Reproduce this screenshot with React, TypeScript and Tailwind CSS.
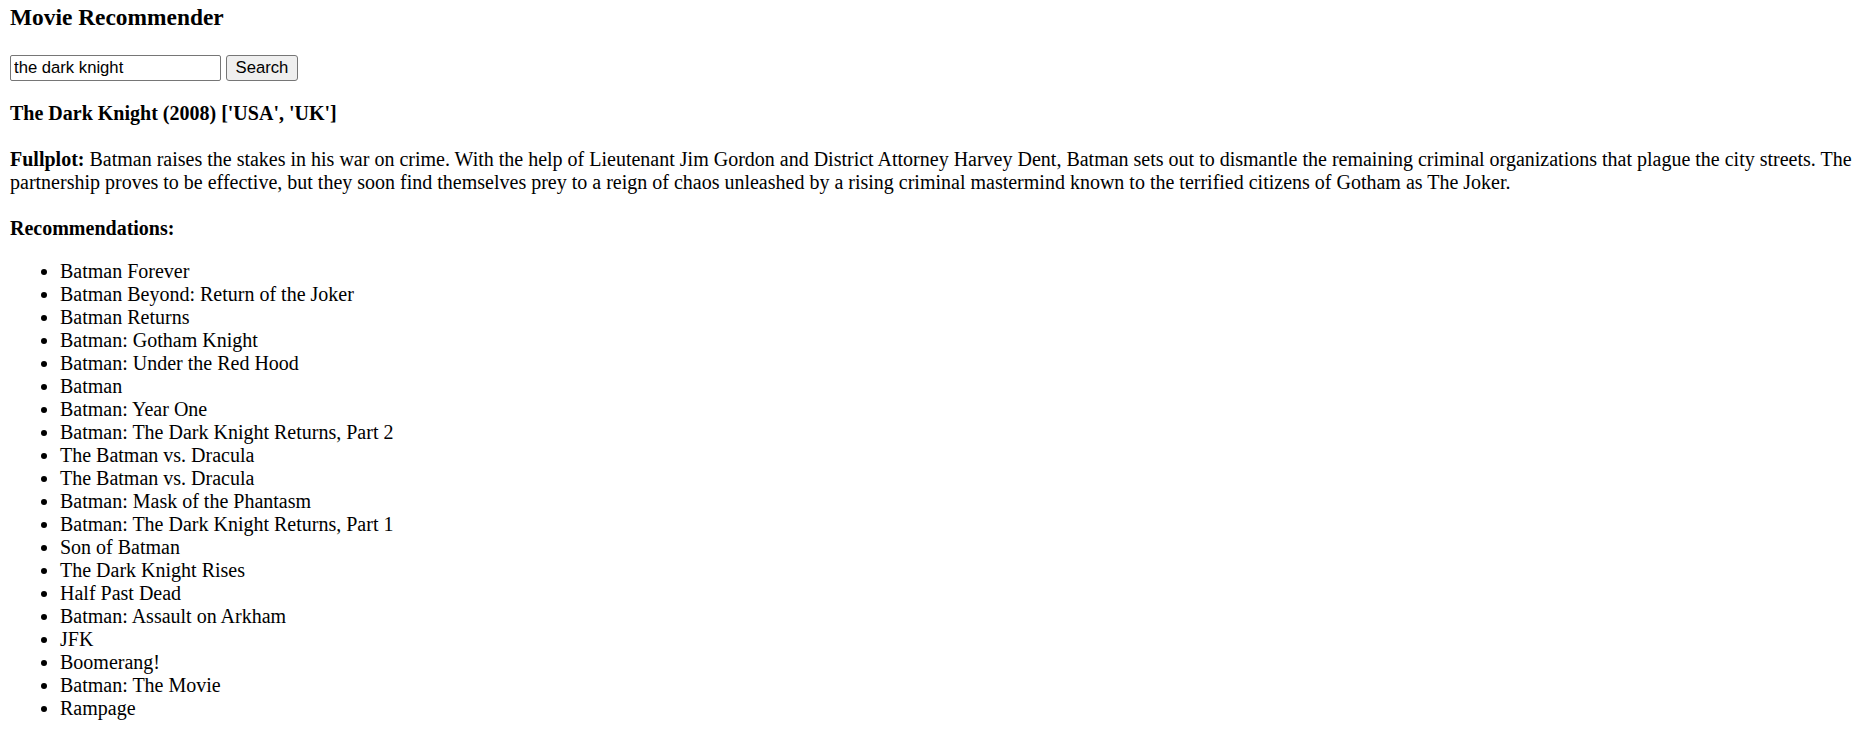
import { useState } from "react";

const movie = {
  title: "The Dark Knight",
  year: 2008,
  countries: "['USA', 'UK']",
  fullplot:
    "Batman raises the stakes in his war on crime. With the help of Lieutenant Jim Gordon and District Attorney Harvey Dent, Batman sets out to dismantle the remaining criminal organizations that plague the city streets. The partnership proves to be effective, but they soon find themselves prey to a reign of chaos unleashed by a rising criminal mastermind known to the terrified citizens of Gotham as The Joker.",
};

const recommendations = [
  "Batman Forever",
  "Batman Beyond: Return of the Joker",
  "Batman Returns",
  "Batman: Gotham Knight",
  "Batman: Under the Red Hood",
  "Batman",
  "Batman: Year One",
  "Batman: The Dark Knight Returns, Part 2",
  "The Batman vs. Dracula",
  "The Batman vs. Dracula",
  "Batman: Mask of the Phantasm",
  "Batman: The Dark Knight Returns, Part 1",
  "Son of Batman",
  "The Dark Knight Rises",
  "Half Past Dead",
  "Batman: Assault on Arkham",
  "JFK",
  "Boomerang!",
  "Batman: The Movie",
  "Rampage",
];

const App = () => {
  const [query, setQuery] = useState("the dark knight");

  return (
    <div className="bg-white px-[10px] pt-[4px] text-black font-['Liberation_Serif',serif] text-[20px] leading-[23px]">
      <h3 className="text-[23.4px] leading-[27px] font-bold">Movie Recommender</h3>

      {/* Search form */}
      <form
        className="mt-[24px] flex items-center gap-[5px]"
        onSubmit={(e) => e.preventDefault()}
      >
        <input
          value={query}
          onChange={(e) => setQuery(e.target.value)}
          className="h-[26px] w-[211px] border border-[#767676] rounded-[2px] bg-white px-[3px] text-black font-['Liberation_Sans',Arial,sans-serif] text-[16.67px] leading-[20px] outline-none"
        />
        <button
          type="submit"
          className="h-[26px] w-[72px] border border-[#767676] rounded-[3px] bg-[#efefef] text-black font-['Liberation_Sans',Arial,sans-serif] text-[16.67px] leading-[20px]"
        >
          Search
        </button>
      </form>

      {/* Result */}
      <div className="mt-[21px]">
        <p className="font-bold">
          {movie.title} ({movie.year}) {movie.countries}
        </p>
        <p className="mt-[23px]">
          <b>Fullplot:</b> {movie.fullplot}
        </p>
        <p className="mt-[23px] font-bold">Recommendations:</p>
      </div>

      <ul className="mt-[20px] mb-[20px] list-disc pl-[50px]">
        {recommendations.map((rec, i) => (
          <li key={i}>{rec}</li>
        ))}
      </ul>
    </div>
  );
};

export default App;
